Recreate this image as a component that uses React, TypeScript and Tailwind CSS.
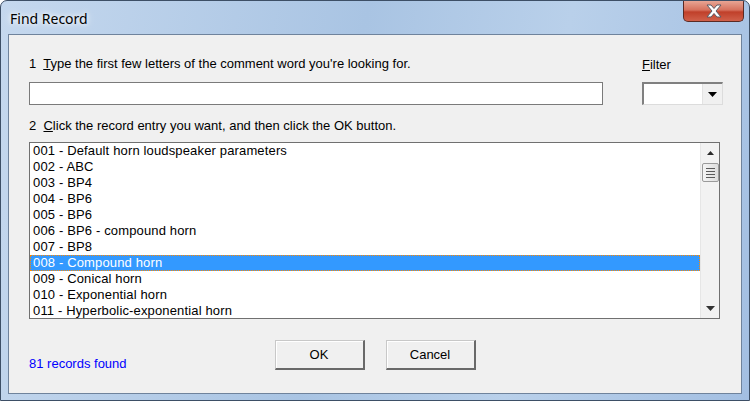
import React from "react";

const rows = [
  "001 - Default horn loudspeaker parameters",
  "002 - ABC",
  "003 - BP4",
  "004 - BP6",
  "005 - BP6",
  "006 - BP6 - compound horn",
  "007 - BP8",
  "008 - Compound horn",
  "009 - Conical horn",
  "010 - Exponential horn",
  "011 - Hyperbolic-exponential horn",
];

export default function App() {
  return (
    <div
      className="w-[750px] h-[401px] flex flex-col rounded-t-[7px] border border-[#3d4f66] bg-[linear-gradient(100deg,#c5d8ee_0%,#a9c4e3_45%,#b9d0ea_70%,#a3bfe2_100%)] overflow-hidden"
      style={{ fontFamily: '"Liberation Sans", Arial, sans-serif' }}
    >
      {/* title bar */}
      <div className="h-[33px] flex items-start justify-between shrink-0">
        <div
          className="pl-[9px] pt-[9px] text-[14px] leading-[18px] text-black"
          style={{ fontFamily: '"Noto Sans", "Open Sans", sans-serif', textShadow: "0 0 8px #ffffff, 0 0 4px #ffffff" }}
        >
          Find Record
        </div>
        <div className="mr-[5px] w-[61px] h-[21px] rounded-b-[5px] border border-t-0 border-[#5a2a24] bg-[linear-gradient(180deg,#e8a594_0%,#d6715d_45%,#c0402a_55%,#d0604a_100%)] flex items-center justify-center">
          <svg width="18" height="14" viewBox="0 0 18 14">
            <path
              d="M2 1 L6 1 L9 4.5 L12 1 L16 1 L11 7 L16 13 L12 13 L9 9.5 L6 13 L2 13 L7 7 Z"
              fill="#ffffff"
              stroke="#5b5b66"
              strokeWidth="1"
              strokeLinejoin="round"
            />
          </svg>
        </div>
      </div>

      {/* client area */}
      <div className="mx-[7px] h-[360px] border border-[#6f839c] bg-[#f0f0f0] flex flex-col pl-[20px] pr-[20px] pt-[21px] text-[13px] leading-[16px] text-black">
        <div className="flex gap-[39px]">
          <div className="w-[574px] shrink-0 flex flex-col">
            <div className="h-[16px]">
              1&nbsp; <span className="underline">T</span>ype the first few letters of the comment word you're looking for.
            </div>
            <div className="mt-[10px] h-[23px] border border-[#7a7a7a] bg-white" />
          </div>
          <div className="w-[81px] shrink-0 flex flex-col">
            <div className="h-[16px] mt-[1px]">
              <span className="underline">F</span>ilter
            </div>
            <div className="mt-[9px] h-[23px] flex border-t-2 border-l-2 border-[#808080] border-b border-r border-b-[#dcdcdc] border-r-[#dcdcdc] bg-white">
              <div className="flex-1" />
              <div className="w-[20px] h-full bg-[#f0f0f0] border-l border-[#e3e3e3] flex items-center justify-center">
                <svg width="9" height="5" viewBox="0 0 9 5">
                  <path d="M0 0 L9 0 L4.5 5 Z" fill="#000" />
                </svg>
              </div>
            </div>
          </div>
        </div>

        <div className="mt-[13px] h-[16px]">
          2&nbsp; <span className="underline">C</span>lick the record entry you want, and then click the OK button.
        </div>

        {/* listbox */}
        <div className="mt-[8px] w-[691px] h-[177px] border border-[#707070] bg-white flex overflow-hidden">
          <div className="flex-1 flex flex-col overflow-hidden tracking-[0.15px]">
            {rows.map((r, i) =>
              i === 7 ? (
                <div
                  key={r}
                  className="h-[16px] shrink-0 bg-[#3399ff] text-white pl-[2px] border border-dotted border-[#ff8800] leading-[14px]"
                >
                  {r}
                </div>
              ) : (
                <div key={r} className="h-[16px] shrink-0 pl-[3px] leading-[16px] whitespace-nowrap">
                  {r}
                </div>
              )
            )}
          </div>
          <div className="w-[19px] h-full bg-[#f2f2f2] border-l border-[#e6e6e6] flex flex-col items-center">
            <div className="h-[20px] flex items-center justify-center">
              <svg width="7" height="4" viewBox="0 0 7 4">
                <path d="M3.5 0 L7 4 L0 4 Z" fill="#2a2a2a" />
              </svg>
            </div>
            <div className="w-[17px] h-[19px] rounded-[2px] border border-[#9a9a9a] bg-[linear-gradient(90deg,#f4f4f4,#dedede)] flex flex-col items-center justify-center gap-[2px]">
              <div className="w-[9px] h-px bg-[#5a5a5a]" />
              <div className="w-[9px] h-px bg-[#5a5a5a]" />
              <div className="w-[9px] h-px bg-[#5a5a5a]" />
              <div className="w-[9px] h-px bg-[#5a5a5a]" />
            </div>
            <div className="flex-1" />
            <div className="h-[20px] flex items-center justify-center">
              <svg width="9" height="5" viewBox="0 0 9 5">
                <path d="M0 0 L9 0 L4.5 5 Z" fill="#333" />
              </svg>
            </div>
          </div>
        </div>

        {/* bottom */}
        <div className="mt-[21px] -ml-[20px] -mr-[20px] grid grid-cols-[1fr_auto_1fr] items-start">
          <div className="pl-[20px] pt-[16px] text-[#0000ff]">81 records found</div>
          <div className="flex gap-[21px]">
            <button className="w-[90px] h-[30px] bg-[#f0f0f0] border-t border-l border-[#c8c8c8] border-b-2 border-r-2 border-b-[#696969] border-r-[#696969] shadow-[inset_1px_1px_0_#ffffff] text-[13px]">
              OK
            </button>
            <button className="w-[90px] h-[30px] bg-[#f0f0f0] border-t border-l border-[#c8c8c8] border-b-2 border-r-2 border-b-[#696969] border-r-[#696969] shadow-[inset_1px_1px_0_#ffffff] text-[13px]">
              Cancel
            </button>
          </div>
          <div />
        </div>
      </div>
    </div>
  );
}
